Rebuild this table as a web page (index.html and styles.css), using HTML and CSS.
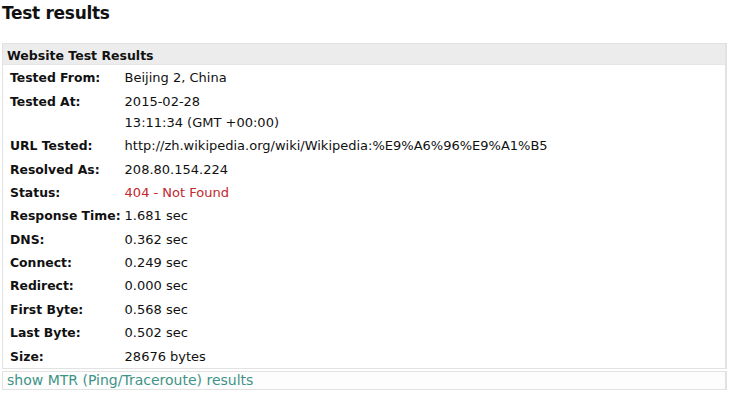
FILE: index.html
```html
<!DOCTYPE html>
<html>
<head>
<meta charset="utf-8">
<link rel="stylesheet" href="styles.css">
</head>
<body>
<h1 class="title">Test results</h1>
<div class="box">
  <div class="box-head">Website Test Results</div>
  <table class="results">
    <tr><th>Tested From:</th><td>Beijing 2, China</td></tr>
    <tr><th>Tested At:</th><td>2015-02-28<br>13:11:34 (GMT +00:00)</td></tr>
    <tr><th>URL Tested:</th><td>http://zh.wikipedia.org/wiki/Wikipedia:%E9%A6%96%E9%A1%B5</td></tr>
    <tr><th>Resolved As:</th><td>208.80.154.224</td></tr>
    <tr><th>Status:</th><td class="bad">404 - Not Found</td></tr>
    <tr><th>Response Time:</th><td>1.681 sec</td></tr>
    <tr><th>DNS:</th><td>0.362 sec</td></tr>
    <tr><th>Connect:</th><td>0.249 sec</td></tr>
    <tr><th>Redirect:</th><td>0.000 sec</td></tr>
    <tr><th>First Byte:</th><td>0.568 sec</td></tr>
    <tr><th>Last Byte:</th><td>0.502 sec</td></tr>
    <tr><th>Size:</th><td>28676 bytes</td></tr>
  </table>
</div>
<div class="box link-box"><a href="#" class="mtr">show MTR (Ping/Traceroute) results</a></div>
</body>
</html>
```
FILE: styles.css
```css
html, body { margin: 0; padding: 0; background: #fff; }
body {
  font-family: "DejaVu Sans", Verdana, sans-serif;
  font-size: 13px;
  color: #111;
  padding: 0 5px 0 2px;
}
.title {
  margin: 0;
  padding: 3px 0 0 0;
  font-size: 17px;
  letter-spacing: -0.3px;
  line-height: 20px;
  font-weight: bold;
  height: 40px;
}
.box {
  border: 1px solid #e2e2e2;
  border-right-width: 2px;
  background: #fff;
}
.box-head {
  background: #ececec;
  font-weight: bold;
  font-size: 12.5px;
  padding: 3px 4px 0 4px;
  height: 17px;
  line-height: 17px;
  border-bottom: 1px solid #e6e6e6;
}
.results {
  border-collapse: collapse;
  margin: 1.3px 0 0 4px;
}
.results th, .results td {
  vertical-align: baseline;
  padding: 1.2px 3px;
  line-height: 21px;
  text-align: left;
}
.results th {
  font-weight: bold;
  font-size: 12.4px;
  white-space: nowrap;
  padding-right: 1px;
  width: 110px;
}
.results td { font-size: 13px; }
.bad { color: #c1272d; }
.link-box {
  margin-top: 2px;
  height: 17px;
  background: #fdfdfd;
  padding: 0 4px;
  line-height: 17px;
}
.mtr {
  color: #3d9388;
  text-decoration: none;
  font-size: 14px;
}
```
